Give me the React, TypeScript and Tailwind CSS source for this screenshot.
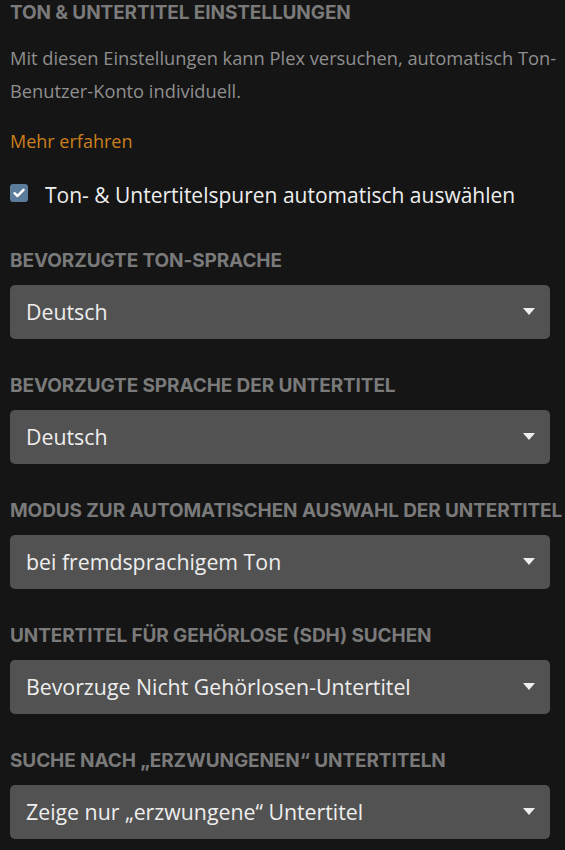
import React from 'react';

interface SelectSetting {
    label: string,
    value: string,
}

const settings: Array<SelectSetting> = [
    { label: 'Bevorzugte Ton-Sprache', value: 'Deutsch' },
    { label: 'Bevorzugte Sprache der Untertitel', value: 'Deutsch' },
    { label: 'Modus zur automatischen Auswahl der Untertitel', value: 'bei fremdsprachigem Ton' },
    { label: 'Untertitel für Gehörlose (SDH) suchen', value: 'Bevorzuge Nicht Gehörlosen-Untertitel' },
    { label: 'Suche nach „erzwungenen“ Untertiteln', value: 'Zeige nur „erzwungene“ Untertitel' },
];

function SectionHeader({ children }: { children: React.ReactNode }) {
    return (
        <div className="whitespace-nowrap font-['Inter',sans-serif] text-[19px] leading-[20px] font-bold uppercase tracking-[-0.1px] text-[#7a7a7a]">
            {children}
        </div>
    );
}

function SelectBox({ value }: { value: string }) {
    return (
        <div className="flex h-[54px] w-[540px] items-center justify-between rounded-[5px] bg-[#525252] pl-[16px] pr-[15px]">
            <span className="text-[21.3px] leading-[28px] text-[#eeeeee]">{value}</span>
            <svg width="12" height="7" viewBox="0 0 12 7" className="mt-[-2px]">
                <path d="M0 0 L12 0 L6 7 Z" fill="#eeeeee" />
            </svg>
        </div>
    );
}

export default function App() {
    return (
        <div className="min-h-[850px] w-full overflow-hidden bg-[#151515] px-[10px] pt-[3px] font-['Open_Sans',sans-serif]">
            <SectionHeader>Ton &amp; Untertitel Einstellungen</SectionHeader>

            <div className="mt-[18px] whitespace-nowrap text-[18.3px] leading-[33px] text-[#8f8f8f]">
                <div>Mit diesen Einstellungen kann Plex versuchen, automatisch Ton-</div>
                <div>Benutzer-Konto individuell.</div>
            </div>

            <div className="mt-[18px] text-[18px] leading-[33px] text-[#cc7f1c]">
                Mehr erfahren
            </div>

            <label className="mt-[23px] flex items-start gap-[17px]">
                <span className="mt-[3px] flex h-[18px] w-[18px] items-center justify-center rounded-[3px] bg-[#5b7c9b]">
                    <svg width="12" height="10" viewBox="0 0 12 10">
                        <path d="M1.5 5.2 L4.5 8 L10.5 1.8" stroke="#ffffff" strokeWidth="2.4" fill="none" strokeLinecap="round" strokeLinejoin="round" />
                    </svg>
                </span>
                <span className="text-[21px] leading-[28px] text-[#eeeeee]">
                    Ton- &amp; Untertitelspuren automatisch auswählen
                </span>
            </label>

            <div className="mt-[42px] flex flex-col gap-[37px]">
                {settings.map((s) => (
                    <div key={s.label} className="flex flex-col gap-[14px]">
                        <SectionHeader>{s.label}</SectionHeader>
                        <SelectBox value={s.value} />
                    </div>
                ))}
            </div>
        </div>
    );
}
